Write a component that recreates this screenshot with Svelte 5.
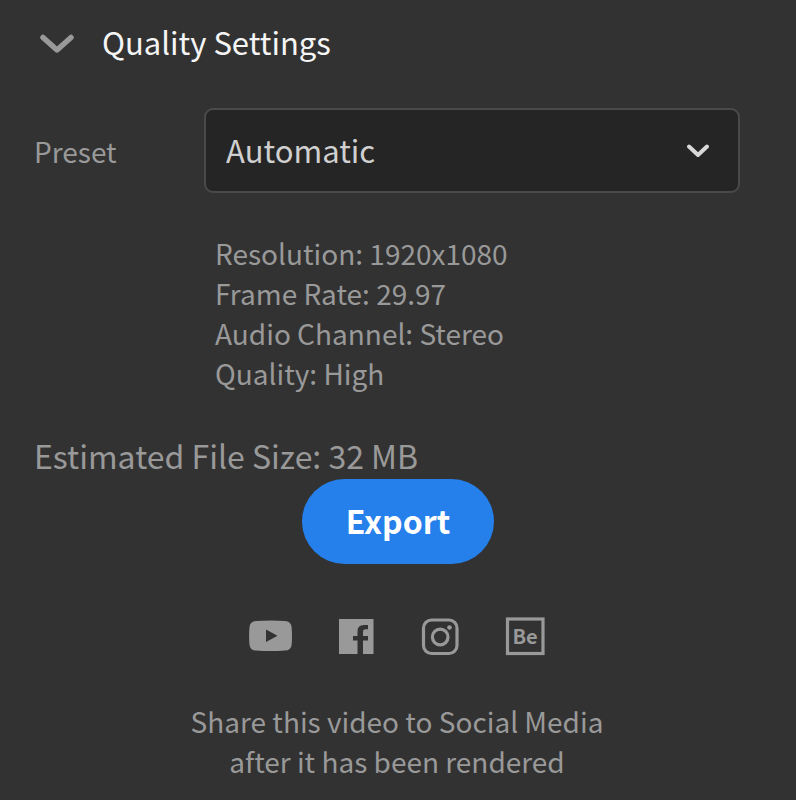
<script lang="ts">
	let open = true;
	let preset = 'Automatic';

	const presets = ['Automatic', 'Custom'];
	const details = [
		{ name: 'Resolution', value: '1920x1080' },
		{ name: 'Frame Rate', value: '29.97' },
		{ name: 'Audio Channel', value: 'Stereo' },
		{ name: 'Quality', value: 'High' }
	];
</script>

<main>
	<h1>
		<button class="toggle" aria-expanded={open} on:click={() => (open = !open)}>
			<svg class:closed={!open} width="34" height="26" viewBox="0 0 34 26" aria-hidden="true">
				<path d="M3 8.500 17 21 31 8.500" />
			</svg>
			<span>Quality Settings</span>
		</button>
	</h1>

	{#if open}
		<div class="settings">
			<label for="preset">Preset</label>
			<div class="select">
				<select id="preset" bind:value={preset}>
					{#each presets as option}
						<option value={option}>{option}</option>
					{/each}
				</select>
				<svg width="22" height="14" viewBox="0 0 22 14" aria-hidden="true">
					<path d="M2 2.500 11 11 20 2.500" />
				</svg>
			</div>
			<ul>
				{#each details as { name, value }}
					<li>{name}: {value}</li>
				{/each}
			</ul>
		</div>
	{/if}

	<p class="size">Estimated File Size: 32 MB</p>

	<button class="export">Export</button>

	<nav>
		<a href="#youtube" aria-label="YouTube">
			<svg width="44" height="40" viewBox="0 0 44 40">
				<path
					fill-rule="evenodd"
					d="M7 5Q22 4 36 5Q42 5.500 42.600 11Q43.400 20 42.600 29Q42 34.300 36 34.600Q22 35.600 7 34.600Q1 34.300 .5 29Q-.3 20 .5 11Q1 5.500 7 5ZM17 13.500V26L28.500 19.700Z" />
			</svg>
		</a>
		<a href="#facebook" aria-label="Facebook">
			<svg width="36" height="40" viewBox="0 0 36 40">
				<path
					d="M0 3H34.500V38H24V24.500H29V20H24V16Q24 13.200 26.500 13.200H29V9H25Q18.500 9 18.500 15V20H14V24.500H18.500V38H0Z" />
			</svg>
		</a>
		<a href="#instagram" aria-label="Instagram">
			<svg class="line" width="38" height="40" viewBox="0 0 38 40">
				<rect x="2.500" y="4" width="33.500" height="33.500" rx="8" />
				<circle cx="19.200" cy="21" r="7.800" />
				<circle class="dot" cx="28.500" cy="11.500" r="2.300" />
			</svg>
		</a>
		<a href="#behance" aria-label="Behance">
			<svg class="line" width="40" height="40" viewBox="0 0 40 40">
				<rect x="2.500" y="3" width="35.500" height="34.500" />
				<text x="20" y="28" text-anchor="middle">Be</text>
			</svg>
		</a>
	</nav>

	<p class="share">Share this video to Social Media<br />after it has been rendered</p>
</main>

<style>
	:global(body) {
		margin: 0;
		background: #323232;
	}
	main {
		display: flex;
		flex-direction: column;
		padding: 22px 56px 16px 34px;
		font-family: 'Noto Sans CJK SC', 'Noto Sans', sans-serif;
		font-size: 28px;
		line-height: 40px;
		color: #999;
	}
	h1,
	p,
	ul {
		margin: 0;
		padding: 0;
		font-weight: 400;
	}
	button {
		border: none;
		font-family: inherit;
		cursor: pointer;
	}
	.toggle {
		display: flex;
		align-items: center;
		gap: 28px;
		padding: 0 6px;
		background: none;
		color: #f5f5f5;
		font-size: 31px;
		line-height: 40px;
	}
	.toggle svg {
		fill: none;
		stroke: #999;
		stroke-width: 5.500;
		stroke-linecap: round;
		stroke-linejoin: round;
	}
	.closed {
		transform: rotate(-90deg);
	}
	.settings {
		display: grid;
		grid-template-columns: 170px 1fr;
		align-items: center;
		row-gap: 40px;
		margin-top: 46px;
	}
	.select {
		display: grid;
		align-items: center;
	}
	.select > * {
		grid-area: 1 / 1;
	}
	select {
		appearance: none;
		width: 100%;
		height: 85px;
		padding: 0 60px 2px 20px;
		border: 2px solid #4a4a4a;
		border-radius: 9px;
		background: #252525;
		color: #d0d0d0;
		font-family: inherit;
		font-size: 31px;
	}
	.select svg {
		justify-self: end;
		margin-right: 31px;
		fill: none;
		stroke: #d8d8d8;
		stroke-width: 4;
		stroke-linecap: round;
		stroke-linejoin: round;
		pointer-events: none;
	}
	ul {
		grid-column: 2;
		padding-left: 11px;
		list-style: none;
	}
	.size {
		margin-top: 42px;
		font-size: 32px;
	}
	.export {
		align-self: center;
		height: 85px;
		margin: 4px 0 0 22px;
		padding: 0 44px 4px;
		border-radius: 43px;
		background: #2680eb;
		color: #fff;
		font-size: 32px;
		font-weight: 700;
	}
	nav {
		display: flex;
		justify-content: center;
		gap: 46px;
		margin: 52px 0 0 20px;
	}
	nav a {
		display: flex;
		color: #999;
	}
	nav svg {
		fill: currentColor;
	}
	nav .line {
		fill: none;
		stroke: currentColor;
		stroke-width: 3.200;
	}
	.line .dot,
	.line text {
		fill: currentColor;
		stroke: none;
	}
	.line text {
		font-size: 20px;
		font-weight: 700;
	}
	.share {
		margin: 45px 0 0 20px;
		text-align: center;
	}
</style>
